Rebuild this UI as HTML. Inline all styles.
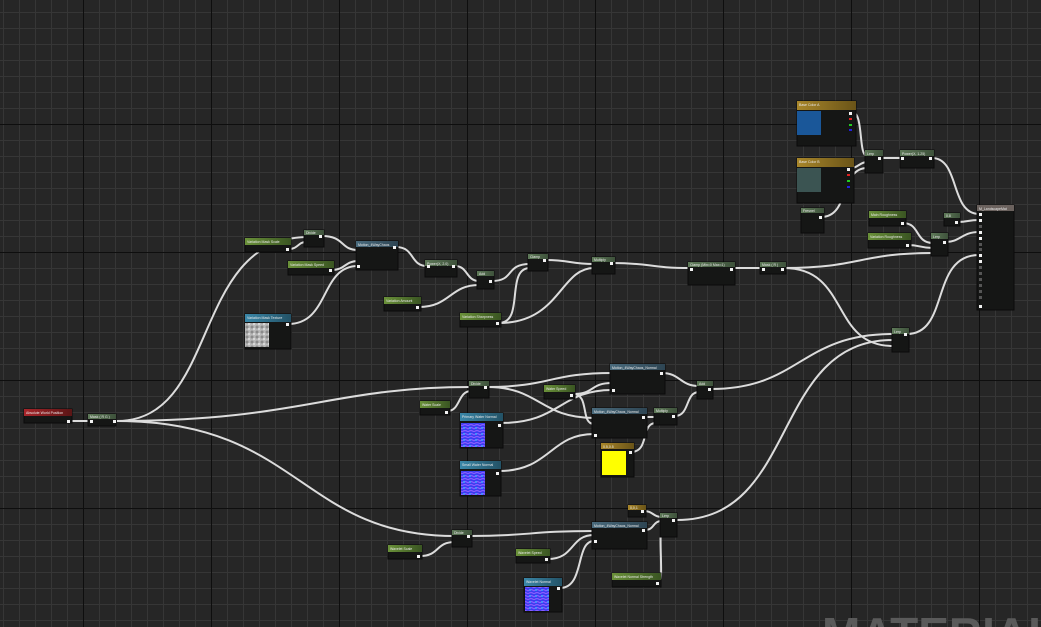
<!DOCTYPE html>
<html><head><meta charset="utf-8"><style>
html,body{margin:0;padding:0;background:#262626;overflow:hidden;width:1041px;height:627px}
svg{display:block}
text{font-family:"Liberation Sans",sans-serif;fill:#e8e8e8}
.n{fill:#151615;stroke:#0a0a0a;stroke-width:1}
.w{fill:none;stroke:#dcdcdc;stroke-width:2}
.p{fill:#f2f2f2}
.g{fill:#555}
</style></head><body>
<svg width="1041" height="627" viewBox="0 0 1041 627" xmlns="http://www.w3.org/2000/svg" style="overflow:hidden">
<defs>
<pattern id="fine" x="3" y="12" width="16" height="16" patternUnits="userSpaceOnUse">
<path d="M0 0.5H16M0.5 0V16" stroke="#363636" stroke-width="1"/>
</pattern>
<pattern id="maj" x="83" y="124" width="128" height="128" patternUnits="userSpaceOnUse">
<path d="M0 0.5H128M0.5 0V128" stroke="#0e0e0e" stroke-width="1"/>
</pattern>
<linearGradient id="gr" x1="0" x2="1"><stop offset="0" stop-color="#6a9139"/><stop offset="1" stop-color="#3a5522"/></linearGradient>
<linearGradient id="gf" x1="0" x2="1"><stop offset="0" stop-color="#5f7a59"/><stop offset="1" stop-color="#3e523b"/></linearGradient>
<linearGradient id="gb" x1="0" x2="1"><stop offset="0" stop-color="#4a6b7d"/><stop offset="1" stop-color="#2e4553"/></linearGradient>
<linearGradient id="gt" x1="0" x2="1"><stop offset="0" stop-color="#3a87a8"/><stop offset="1" stop-color="#235266"/></linearGradient>
<linearGradient id="go" x1="0" x2="1"><stop offset="0" stop-color="#a8862a"/><stop offset="1" stop-color="#6a5418"/></linearGradient>
<linearGradient id="gred" x1="0" x2="1"><stop offset="0" stop-color="#a8252a"/><stop offset="1" stop-color="#5a1515"/></linearGradient>
<pattern id="nrm" width="6" height="6" patternUnits="userSpaceOnUse"><rect width="6" height="6" fill="#3a3cf0"/><path d="M0 3Q3 0 6 3M0 6Q3 3 6 6" stroke="#8a5cff" stroke-width="1.2" fill="none"/><circle cx="2" cy="2" r="1" fill="#3fa0ff"/></pattern>
<pattern id="tex" width="5" height="5" patternUnits="userSpaceOnUse"><rect width="5" height="5" fill="#b8b8b8"/><circle cx="2" cy="2" r="1.5" fill="#8a8a8a"/><circle cx="4" cy="4" r="1" fill="#e0e0e0"/></pattern>
</defs>
<rect width="1041" height="627" fill="#262626"/>
<rect width="1041" height="627" fill="url(#fine)"/>
<rect width="1041" height="627" fill="url(#maj)"/>

<text x="822" y="650" font-size="46" font-weight="bold" style="fill:#5a5a5a">MATERIAL</text>

<g class="w">
<path d="M72 421C80 421 81 421 89 421"/>
<path d="M117 421C220 421 190 240 306 237"/>
<path d="M117 421C300 421 330 387 471 387"/>
<path d="M117 421C300 421 300 536 455 536"/>
<path d="M289 249C298 249 298 242 306 242"/>
<path d="M322 236C345 236 340 250 358 250"/>
<path d="M332 270C345 270 345 261 358 261"/>
<path d="M288 324C330 324 320 266 358 266"/>
<path d="M396 247C415 247 410 266 427 266"/>
<path d="M455 266C468 266 466 281 479 281"/>
<path d="M419 307C450 307 450 285 479 285"/>
<path d="M492 281C515 281 505 264 530 264"/>
<path d="M499 323C525 323 505 268 530 268"/>
<path d="M499 323C560 323 560 268 594 268"/>
<path d="M546 260C570 260 570 264 594 264"/>
<path d="M613 263C650 263 650 268 690 268"/>
<path d="M733 268C748 268 748 268 762 268"/>
<path d="M784 268C860 268 860 253 933 253"/>
<path d="M784 268C850 268 830 346 893 346"/>
<path d="M677 520C800 520 770 340 893 340"/>
<path d="M448 411C460 411 458 391 471 391"/>
<path d="M487 387C550 387 550 373 612 373"/>
<path d="M487 387C540 387 540 418 594 418"/>
<path d="M573 394C595 394 590 383 612 383"/>
<path d="M573 394C590 394 580 424 594 424"/>
<path d="M501 423C560 423 560 390 612 390"/>
<path d="M499 471C550 471 550 434 594 434"/>
<path d="M662 373C680 373 680 386 699 386"/>
<path d="M645 417C650 417 650 417 656 417"/>
<path d="M631 452C650 452 640 423 656 423"/>
<path d="M675 416C690 416 685 392 699 392"/>
<path d="M711 389C800 389 800 334 893 334"/>
<path d="M420 556C440 556 435 542 455 542"/>
<path d="M470 536C530 536 530 531 594 531"/>
<path d="M548 559C575 559 570 535 594 535"/>
<path d="M560 588C585 588 575 541 594 541"/>
<path d="M645 530C655 530 652 521 662 521"/>
<path d="M644 511C653 511 653 517 662 517"/>
<path d="M659 583C664 583 658 530 662 527"/>
<path d="M852 112C864 112 858 156 867 156"/>
<path d="M851 168C858 168 860 162 867 162"/>
<path d="M821 217C850 217 840 168 867 168"/>
<path d="M881 158C890 158 893 158 902 158"/>
<path d="M932 158C960 158 950 214 979 214"/>
<path d="M903 223C920 223 915 243 933 243"/>
<path d="M908 245C920 245 920 248 933 248"/>
<path d="M958 222C968 222 968 220 979 220"/>
<path d="M946 242C960 242 962 232 979 232"/>
<path d="M907 334C950 334 930 255 979 255"/>
</g>

<g font-size="3.5">
<rect class="n" x="797" y="101" width="59" height="45"/><rect x="797" y="101" width="59" height="9" fill="url(#go)"/><text x="799" y="106">Base Color A</text><rect x="797" y="111" width="24" height="24" fill="#1a5799"/>
<rect class="p" x="849" y="112" width="3" height="3"/><rect x="849" y="118" width="3" height="2" fill="#d22"/><rect x="849" y="124" width="3" height="2" fill="#2c2"/><rect x="849" y="129" width="3" height="2" fill="#22d"/>
<rect class="n" x="797" y="158" width="57" height="45"/><rect x="797" y="158" width="57" height="9" fill="url(#go)"/><text x="799" y="163">Base Color B</text><rect x="797" y="168" width="24" height="24" fill="#3b5452"/>
<rect class="p" x="847" y="168" width="3" height="3"/><rect x="847" y="174" width="3" height="2" fill="#d22"/><rect x="847" y="180" width="3" height="2" fill="#2c2"/><rect x="847" y="186" width="3" height="2" fill="#22d"/>
<rect class="n" x="801" y="208" width="23" height="25"/><rect x="801" y="208" width="23" height="5" fill="url(#gf)"/><text x="803" y="212">Fresnel</text><rect class="p" x="819" y="216" width="3" height="3"/>
<rect class="n" x="865" y="150" width="18" height="23"/><rect x="865" y="150" width="18" height="6" fill="url(#gf)"/><text x="867" y="155">Lerp</text><rect class="p" x="878" y="157" width="3" height="3"/>
<rect class="n" x="900" y="150" width="34" height="18"/><rect x="900" y="150" width="34" height="6" fill="url(#gf)"/><text x="902" y="155">Power(X, 1.25)</text><rect class="p" x="901" y="157" width="3" height="3"/><rect class="p" x="929" y="157" width="3" height="3"/>
<rect class="n" x="869" y="211" width="37" height="15"/><rect x="869" y="211" width="37" height="7" fill="url(#gr)"/><text x="871" y="216">Main Roughness</text><rect class="p" x="901" y="222" width="3" height="3"/>
<rect class="n" x="868" y="233" width="43" height="15"/><rect x="868" y="233" width="43" height="7" fill="url(#gr)"/><text x="870" y="238">Variation Roughness</text><rect class="p" x="906" y="244" width="3" height="3"/>
<rect class="n" x="944" y="213" width="16" height="13"/><rect x="944" y="213" width="16" height="5" fill="url(#gf)"/><text x="946" y="217">0.8</text><rect class="p" x="955" y="221" width="3" height="3"/>
<rect class="n" x="931" y="233" width="17" height="23"/><rect x="931" y="233" width="17" height="6" fill="url(#gf)"/><text x="933" y="238">Lerp</text><rect class="p" x="943" y="241" width="3" height="3"/>
<rect class="n" x="977" y="205" width="37" height="105"/><rect x="977" y="205" width="37" height="6" fill="#6b625e"/><text x="979" y="210">M_LandscapeMat</text>
<g class="p"><rect x="979" y="213" width="3" height="3"/><rect x="979" y="219" width="3" height="3"/><rect x="979" y="231" width="3" height="3"/><rect x="979" y="237" width="3" height="3"/><rect x="979" y="254" width="3" height="3"/><rect x="979" y="260" width="3" height="3"/><rect x="979" y="305" width="3" height="3"/></g>
<g class="g"><rect x="979" y="225" width="3" height="3"/><rect x="979" y="243" width="3" height="3"/><rect x="979" y="248" width="3" height="3"/><rect x="979" y="266" width="3" height="3"/><rect x="979" y="272" width="3" height="3"/><rect x="979" y="278" width="3" height="3"/><rect x="979" y="284" width="3" height="3"/><rect x="979" y="290" width="3" height="3"/><rect x="979" y="296" width="3" height="3"/></g>
<rect class="n" x="892" y="328" width="17" height="24"/><rect x="892" y="328" width="17" height="6" fill="url(#gf)"/><text x="894" y="333">Lerp</text><rect class="p" x="904" y="333" width="3" height="3"/>

<rect class="n" x="245" y="238" width="46" height="14"/><rect x="245" y="238" width="46" height="7" fill="url(#gr)"/><text x="247" y="243">Variation Mask Scale</text><rect class="p" x="286" y="248" width="3" height="3"/>
<rect class="n" x="304" y="230" width="20" height="17"/><rect x="304" y="230" width="20" height="5" fill="url(#gf)"/><text x="306" y="234">Divide</text><rect class="p" x="319" y="235" width="3" height="3"/>
<rect class="n" x="356" y="241" width="42" height="29"/><rect x="356" y="241" width="42" height="6" fill="url(#gb)"/><text x="358" y="246">Motion_4WayChaos</text><rect class="p" x="393" y="246" width="3" height="3"/><rect class="p" x="357" y="265" width="3" height="3"/>
<rect class="n" x="288" y="261" width="46" height="14"/><rect x="288" y="261" width="46" height="7" fill="url(#gr)"/><text x="290" y="266">Variation Mask Speed</text><rect class="p" x="329" y="269" width="3" height="3"/>
<rect class="n" x="245" y="314" width="46" height="35"/><rect x="245" y="314" width="46" height="8" fill="url(#gt)"/><text x="247" y="319">Variation Mask Texture</text><rect x="245" y="323" width="24" height="24" fill="url(#tex)"/><rect class="p" x="286" y="323" width="3" height="3"/>
<rect class="n" x="425" y="260" width="32" height="17"/><rect x="425" y="260" width="32" height="6" fill="url(#gf)"/><text x="427" y="265">Power(X, 2.0)</text><rect class="p" x="427" y="265" width="3" height="3"/><rect class="p" x="452" y="265" width="3" height="3"/>
<rect class="n" x="477" y="271" width="17" height="18"/><rect x="477" y="271" width="17" height="5" fill="url(#gf)"/><text x="479" y="275">Add</text><rect class="p" x="489" y="280" width="3" height="3"/>
<rect class="n" x="384" y="297" width="37" height="14"/><rect x="384" y="297" width="37" height="7" fill="url(#gr)"/><text x="386" y="302">Variation Amount</text><rect class="p" x="416" y="306" width="3" height="3"/>
<rect class="n" x="460" y="313" width="41" height="14"/><rect x="460" y="313" width="41" height="7" fill="url(#gr)"/><text x="462" y="318">Variation Sharpness</text><rect class="p" x="496" y="322" width="3" height="3"/>
<rect class="n" x="528" y="254" width="20" height="17"/><rect x="528" y="254" width="20" height="5" fill="url(#gf)"/><text x="530" y="258">Clamp</text><rect class="p" x="543" y="259" width="3" height="3"/>
<rect class="n" x="592" y="257" width="23" height="17"/><rect x="592" y="257" width="23" height="5" fill="url(#gf)"/><text x="594" y="261">Multiply</text><rect class="p" x="610" y="262" width="3" height="3"/>
<rect class="n" x="688" y="262" width="47" height="23"/><rect x="688" y="262" width="47" height="5" fill="url(#gf)"/><text x="690" y="266">Clamp (Min=0 Max=1)</text><rect class="p" x="690" y="268" width="3" height="3"/><rect class="p" x="730" y="268" width="3" height="3"/>
<rect class="n" x="760" y="262" width="26" height="12"/><rect x="760" y="262" width="26" height="5" fill="url(#gf)"/><text x="762" y="266">Mask ( R )</text><rect class="p" x="762" y="268" width="3" height="3"/><rect class="p" x="781" y="268" width="3" height="3"/>

<rect class="n" x="24" y="409" width="48" height="14"/><rect x="24" y="409" width="48" height="7" fill="url(#gred)"/><text x="26" y="414">Absolute World Position</text><rect class="p" x="67" y="420" width="3" height="3"/>
<rect class="n" x="88" y="414" width="28" height="12"/><rect x="88" y="414" width="28" height="5" fill="url(#gf)"/><text x="90" y="418">Mask ( R G )</text><rect class="p" x="90" y="420" width="3" height="3"/><rect class="p" x="113" y="420" width="3" height="3"/>
<rect class="n" x="469" y="381" width="20" height="17"/><rect x="469" y="381" width="20" height="5" fill="url(#gf)"/><text x="471" y="385">Divide</text><rect class="p" x="484" y="386" width="3" height="3"/>
<rect class="n" x="420" y="401" width="30" height="14"/><rect x="420" y="401" width="30" height="7" fill="url(#gr)"/><text x="422" y="406">Water Scale</text><rect class="p" x="445" y="411" width="3" height="3"/>
<rect class="n" x="460" y="413" width="43" height="35"/><rect x="460" y="413" width="43" height="8" fill="url(#gt)"/><text x="462" y="418">Primary Water Normal</text><rect x="461" y="423" width="24" height="24" fill="url(#nrm)"/><rect class="p" x="498" y="424" width="3" height="3"/>
<rect class="n" x="460" y="461" width="41" height="35"/><rect x="460" y="461" width="41" height="8" fill="url(#gt)"/><text x="462" y="466">Small Water Normal</text><rect x="461" y="471" width="24" height="24" fill="url(#nrm)"/><rect class="p" x="496" y="472" width="3" height="3"/>
<rect class="n" x="544" y="385" width="31" height="14"/><rect x="544" y="385" width="31" height="7" fill="url(#gr)"/><text x="546" y="390">Water Speed</text><rect class="p" x="570" y="394" width="3" height="3"/>
<rect class="n" x="610" y="364" width="55" height="30"/><rect x="610" y="364" width="55" height="6" fill="url(#gb)"/><text x="612" y="369">Motion_4WayChaos_Normal</text><rect class="p" x="660" y="372" width="3" height="3"/><rect class="p" x="612" y="389" width="3" height="3"/>
<rect class="n" x="592" y="408" width="55" height="30"/><rect x="592" y="408" width="55" height="6" fill="url(#gb)"/><text x="594" y="413">Motion_4WayChaos_Normal</text><rect class="p" x="642" y="416" width="3" height="3"/><rect class="p" x="594" y="434" width="3" height="3"/>
<rect class="n" x="654" y="408" width="23" height="17"/><rect x="654" y="408" width="23" height="5" fill="url(#gf)"/><text x="656" y="412">Multiply</text><rect class="p" x="672" y="415" width="3" height="3"/>
<rect class="n" x="601" y="443" width="33" height="34"/><rect x="601" y="443" width="33" height="6" fill="url(#go)"/><text x="603" y="448">0.5,0.5</text><rect x="602" y="451" width="24" height="24" fill="#ffff00"/><rect class="p" x="629" y="451" width="3" height="3"/>
<rect class="n" x="697" y="381" width="16" height="18"/><rect x="697" y="381" width="16" height="5" fill="url(#gf)"/><text x="699" y="385">Add</text><rect class="p" x="708" y="388" width="3" height="3"/>

<rect class="n" x="452" y="530" width="20" height="17"/><rect x="452" y="530" width="20" height="5" fill="url(#gf)"/><text x="454" y="534">Divide</text><rect class="p" x="467" y="535" width="3" height="3"/>
<rect class="n" x="388" y="545" width="34" height="14"/><rect x="388" y="545" width="34" height="7" fill="url(#gr)"/><text x="390" y="550">Wavelet Scale</text><rect class="p" x="417" y="555" width="3" height="3"/>
<rect class="n" x="516" y="549" width="34" height="14"/><rect x="516" y="549" width="34" height="7" fill="url(#gr)"/><text x="518" y="554">Wavelet Speed</text><rect class="p" x="545" y="558" width="3" height="3"/>
<rect class="n" x="592" y="522" width="55" height="27"/><rect x="592" y="522" width="55" height="6" fill="url(#gb)"/><text x="594" y="527">Motion_4WayChaos_Normal</text><rect class="p" x="642" y="529" width="3" height="3"/><rect class="p" x="594" y="540" width="3" height="3"/>
<rect class="n" x="628" y="505" width="18" height="12"/><rect x="628" y="505" width="18" height="5" fill="url(#go)"/><text x="630" y="509">0,0,1</text><rect class="p" x="641" y="510" width="3" height="3"/>
<rect class="n" x="660" y="513" width="17" height="24"/><rect x="660" y="513" width="17" height="5" fill="url(#gf)"/><text x="662" y="517">Lerp</text><rect class="p" x="672" y="519" width="3" height="3"/>
<rect class="n" x="524" y="578" width="38" height="34"/><rect x="524" y="578" width="38" height="8" fill="url(#gt)"/><text x="526" y="583">Wavelet Normal</text><rect x="525" y="587" width="24" height="24" fill="url(#nrm)"/><rect class="p" x="557" y="587" width="3" height="3"/>
<rect class="n" x="612" y="573" width="49" height="14"/><rect x="612" y="573" width="49" height="7" fill="url(#gr)"/><text x="614" y="578">Wavelet Normal Strength</text><rect class="p" x="656" y="582" width="3" height="3"/>
</g>
</svg>
</body></html>
